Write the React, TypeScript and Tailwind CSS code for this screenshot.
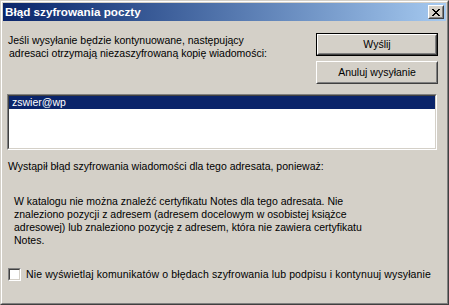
import React from "react";

const raised =
  "border border-t-white border-l-white border-r-[#404040] border-b-[#404040]";
const raisedInner =
  "border border-t-[#d4d0c8] border-l-[#d4d0c8] border-r-[#808080] border-b-[#808080]";
const sunken =
  "border border-t-[#808080] border-l-[#808080] border-r-white border-b-white";
const sunkenInner =
  "border border-t-[#404040] border-l-[#404040] border-r-[#d4d0c8] border-b-[#d4d0c8]";

function CloseButton() {
  return (
    <div className={`w-[16px] h-[14px] bg-[#d4d0c8] ${raised}`}>
      <div className={`w-full h-full flex items-center justify-center ${raisedInner}`}>
        <svg width="8" height="7" viewBox="0 0 8 7" shapeRendering="crispEdges">
          <path
            d="M0 0h2v1H0zM6 0h2v1H6zM1 1h2v1H1zM5 1h2v1H5zM2 2h4v1H2zM3 3h2v1H3zM2 4h4v1H2zM1 5h2v1H1zM5 5h2v1H5zM0 6h2v1H0zM6 6h2v1H6z"
            fill="#000"
          />
        </svg>
      </div>
    </div>
  );
}

function Button({ label, isDefault }: { label: string; isDefault?: boolean }) {
  const body = (
    <div className={`w-full h-full ${raised}`}>
      <div className={`w-full h-full flex items-center justify-center ${raisedInner}`}>
        <span>{label}</span>
      </div>
    </div>
  );
  return isDefault ? (
    <div className="w-[122px] h-[23px] border border-black">{body}</div>
  ) : (
    <div className="w-[122px] h-[23px]">{body}</div>
  );
}

export default function App() {
  const reason = [
    "W katalogu nie można znaleźć certyfikatu Notes dla tego adresata. Nie",
    "znaleziono pozycji z adresem (adresem docelowym w osobistej książce",
    "adresowej) lub znaleziono pozycję z adresem, która nie zawiera certyfikatu",
    "Notes.",
  ];

  return (
    <div className="w-[449px] h-[305px] bg-[#d4d0c8] text-black font-['Liberation_Sans',Arial,sans-serif] text-[10.5px] leading-[13px]">
      <div className="w-full h-full border border-t-[#d4d0c8] border-l-[#d4d0c8] border-r-[#404040] border-b-[#404040]">
        <div className="w-full h-full p-px border border-t-white border-l-white border-r-[#808080] border-b-[#808080] flex flex-col">
          {/* Title bar */}
          <div className="h-[18px] flex items-center justify-between pl-[2px] pr-[2px] bg-gradient-to-r from-[#0a246a] to-[#a6caf0]">
            <span className="text-white font-bold text-[11.7px] leading-[18px]">
              Błąd szyfrowania poczty
            </span>
            <CloseButton />
          </div>

          {/* Body */}
          <div className="flex flex-col pl-[4px]">
            <div className="mt-[12px] flex justify-between pr-[8px]">
              <div className="pt-px pl-px whitespace-nowrap">
                <div>Jeśli wysyłanie będzie kontynuowane, następujący</div>
                <div className="pl-px">adresaci otrzymają niezaszyfrowaną kopię wiadomości:</div>
              </div>
              <div className="flex flex-col gap-[5px]">
                <Button label="Wyślij" isDefault />
                <Button label="Anuluj wysyłanie" />
              </div>
            </div>

            <div className={`mt-[10px] w-[430px] h-[56px] ${sunken}`}>
              <div className={`w-full h-full bg-white ${sunkenInner}`}>
                <div className="h-[13px] bg-[#0a246a] text-white pl-[3px]">zswier@wp</div>
              </div>
            </div>

            <div className="mt-[10px] ml-px whitespace-nowrap">
              Wystąpił błąd szyfrowania wiadomości dla tego adresata, ponieważ:
            </div>

            <div className="mt-[22px] ml-[7px] whitespace-nowrap">
              {reason.map((line) => (
                <div key={line}>{line}</div>
              ))}
            </div>

            <label className="mt-[21px] ml-px flex items-center gap-[5px] whitespace-nowrap">
              <span className={`w-[13px] h-[13px] ${sunken}`}>
                <span className={`block w-full h-full bg-white ${sunkenInner}`} />
              </span>
              <span className="tracking-[0.12px]">
                Nie wyświetlaj komunikatów o błędach szyfrowania lub podpisu i kontynuuj wysyłanie
              </span>
            </label>
          </div>
        </div>
      </div>
    </div>
  );
}
